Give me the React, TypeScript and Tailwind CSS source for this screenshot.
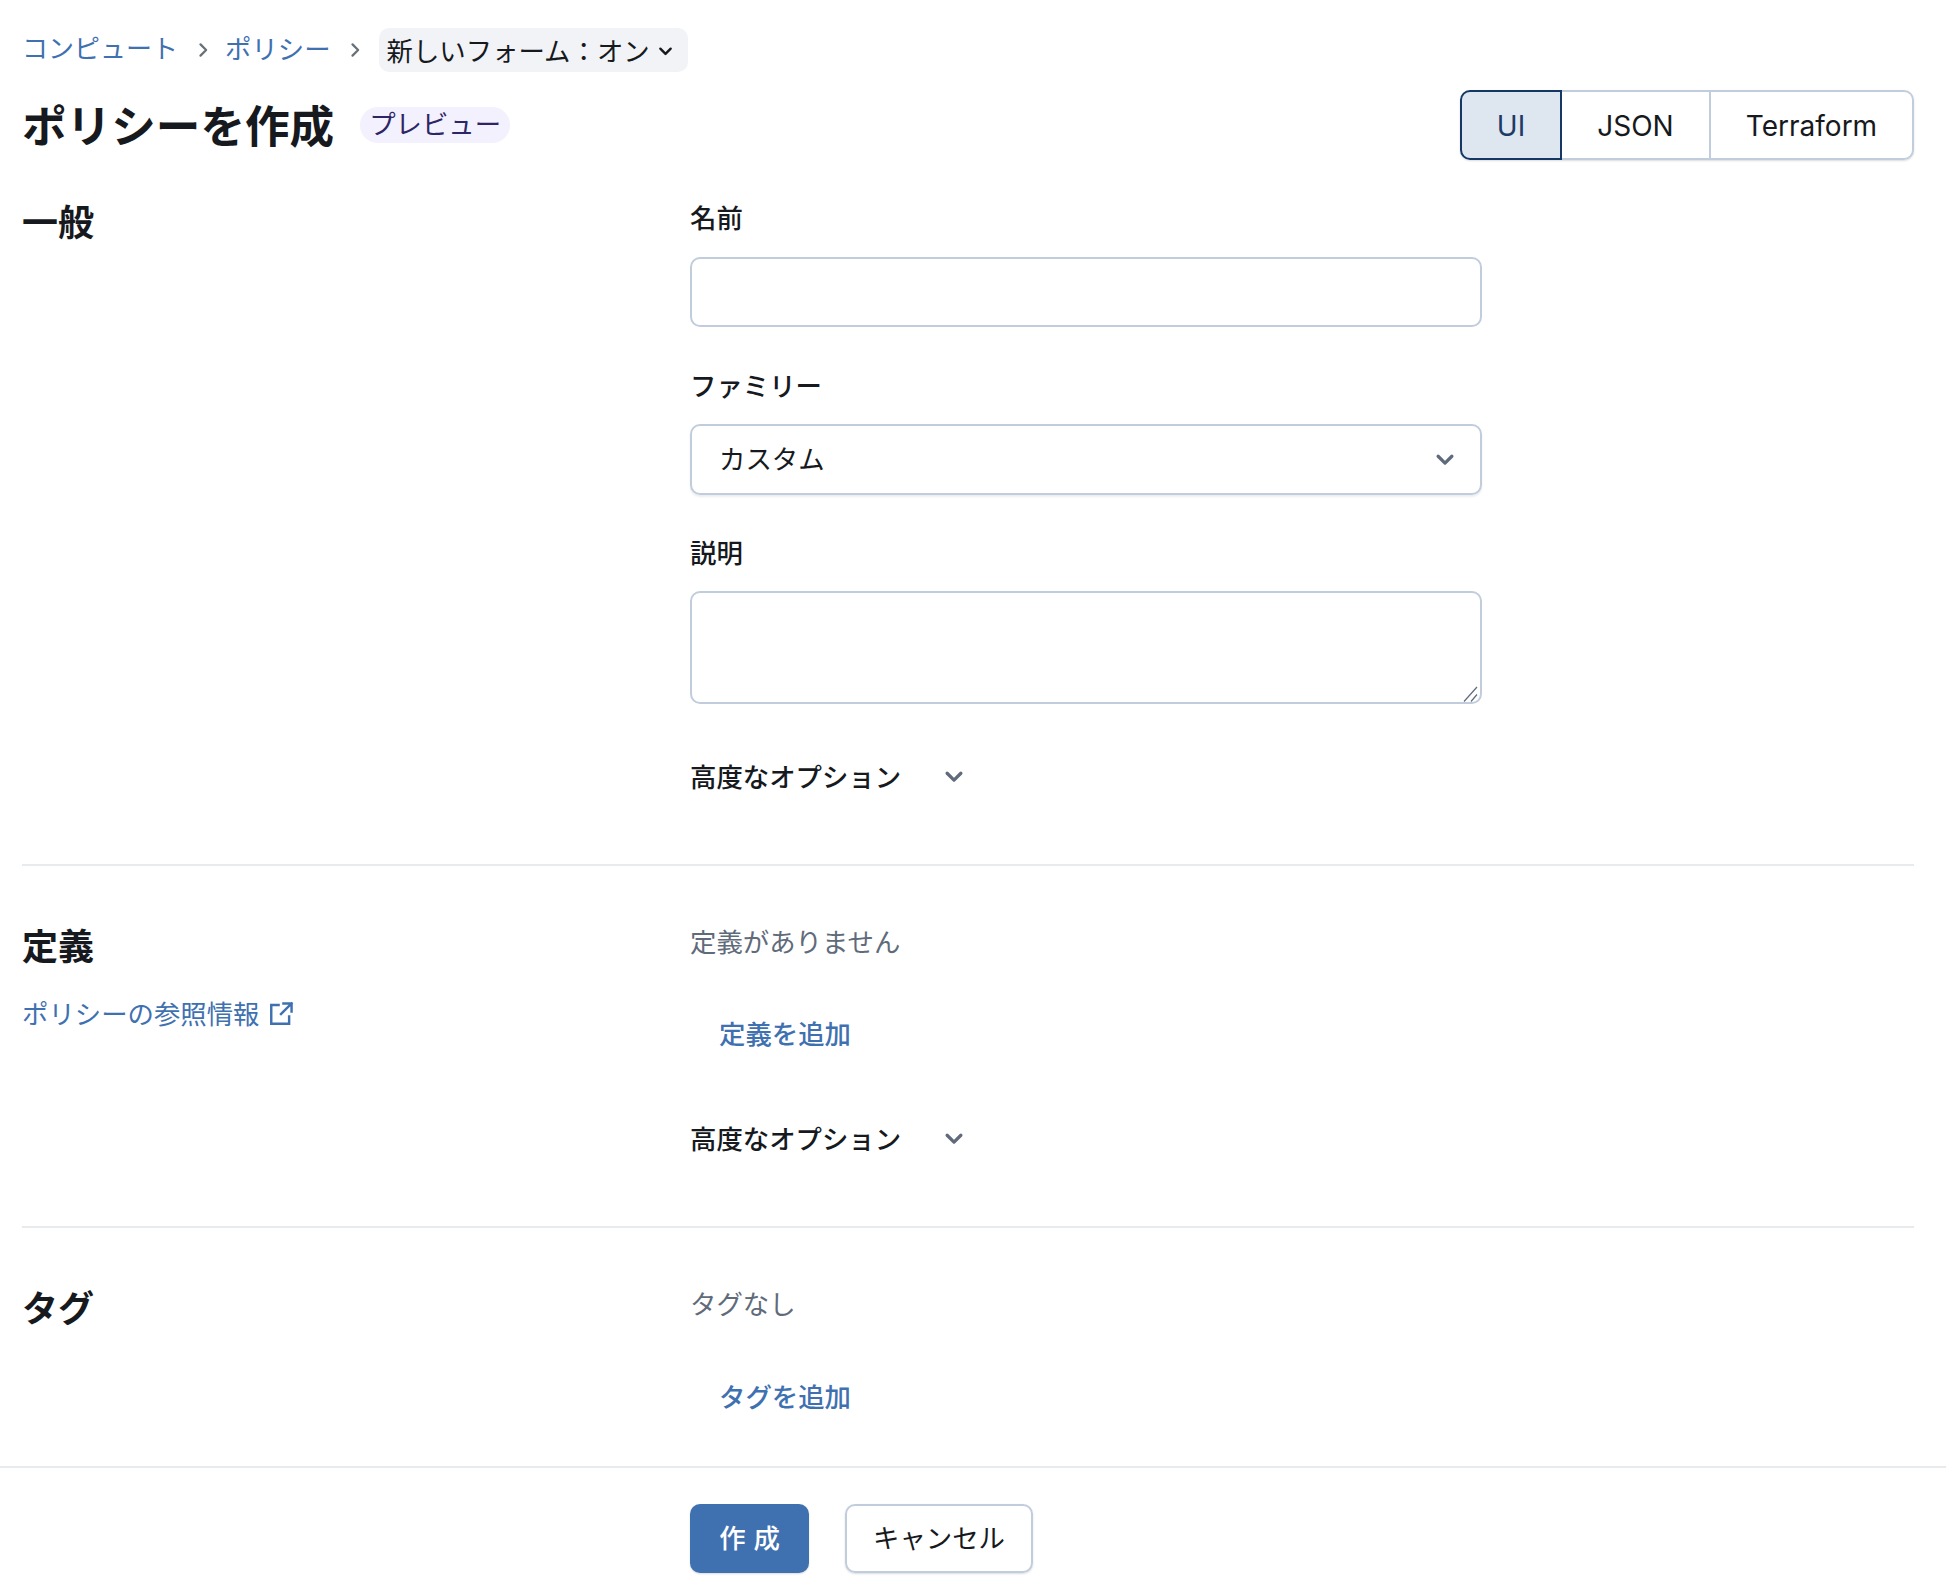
import { ReactNode } from 'react';

const FONT = '[font-family:Inter,"Noto_Sans_CJK_JP",sans-serif]';

function Chevron({ className }: { className: string }) {
  return (
    <svg viewBox="0 0 16 16" fill="none" stroke="currentColor" strokeWidth="2.6" strokeLinecap="round" strokeLinejoin="round" className={className}>
      <path d="M2.5 5 8 10.5 13.5 5" />
    </svg>
  );
}

function Crumb() {
  return (
    <svg viewBox="0 0 16 16" fill="none" stroke="currentColor" strokeWidth="1.8" strokeLinecap="round" strokeLinejoin="round" className="h-[20px] w-[20px] text-[#687078]">
      <path d="M6 3.5 10.5 8 6 12.5" />
    </svg>
  );
}

function Label({ children }: { children: ReactNode }) {
  return <label className="mb-[22px] block h-[32px] text-[26.4px] font-medium leading-[32px] text-[#16191d]">{children}</label>;
}

function Advanced() {
  return (
    <button className="flex h-[32px] items-center text-[26.4px] font-medium leading-[32px] text-[#16191d]">
      高度なオプション
      <Chevron className="ml-[43px] h-[20px] w-[20px] text-[#5f6b7a]" />
    </button>
  );
}

function Section({ left, children, className }: { left: ReactNode; children: ReactNode; className: string }) {
  return (
    <section className={`grid grid-cols-[668px_792px] ${className}`}>
      <div>{left}</div>
      <div>{children}</div>
    </section>
  );
}

export default function App() {
  return (
    <div className={`flex h-[1592px] flex-col overflow-hidden bg-white ${FONT}`}>
      <div className="pl-[22px] pr-[32px]">
        {/* Breadcrumb */}
        <nav className="mt-[28px] flex h-[44px] items-center text-[26.4px] leading-[32px]">
          <a className="mb-[3px] w-[158px] whitespace-nowrap text-[26px] text-[#3f71b0]">コンピュート</a>
          <span className="mx-[13px] mr-[12px] flex"><Crumb /></span>
          <a className="mb-[3px] whitespace-nowrap text-[#3f71b0]">ポリシー</a>
          <span className="ml-[14px] mr-[14px] flex"><Crumb /></span>
          <button className="flex h-[44px] w-[309px] items-center rounded-[10px] bg-[#f2f3f6] pl-[8px] pt-[2px] text-[26.4px] text-[#16191d]">
            新しいフォーム：オン
            <Chevron className="ml-[8px] h-[15px] w-[15px]" />
          </button>
        </nav>

        {/* Title row */}
        <header className="mt-[18px] flex items-center justify-between">
          <div className="flex items-center">
            <h1 className="h-[69px] text-[44.6px] font-bold leading-[72px] text-[#16191d]">ポリシーを作成</h1>
            <span className="ml-[26px] flex h-[36px] items-center rounded-full bg-[#f3f1fd] px-[9px] text-[26.4px] text-[#2e2566]">プレビュー</span>
          </div>
          <div className="flex h-[70px] rounded-[10px] text-[28px] leading-none text-[#16191d] shadow-[0_1px_2px_rgba(0,28,36,0.15)]">
            <button className="w-[102px] rounded-l-[10px] border-2 border-[#143763] bg-[#dee6f0] pt-[2px] text-[#1f3a66]">UI</button>
            <button className="w-[149px] border-y-2 border-r-2 border-[#c1cddc] pt-[2px]">JSON</button>
            <button className="w-[203px] rounded-r-[10px] border-y-2 border-r-2 border-[#c1cddc] pt-[2px]">Terraform</button>
          </div>
        </header>

        {/* General */}
        <Section
          className="mt-[43px] h-[663px] border-b-2 border-[#e8ebee]"
          left={<h2 className="mt-[-6px] text-[36px] font-bold leading-[52px] text-[#16191d]">一般</h2>}
        >
          <div className="mt-[-1px] pb-[1px]"><Label>名前</Label></div>
          <input className="mb-[43px] block h-[70px] w-full rounded-[10px] border-2 border-[#c1cddc] outline-none" />
          <Label>ファミリー</Label>
          <button className="mb-[42px] flex h-[71px] w-full items-center justify-between rounded-[10px] border-2 border-[#c1cddc] pl-[27px] pr-[25px] text-[26.4px] text-[#16191d] shadow-[0_2px_2px_rgba(0,28,36,0.08)]">
            カスタム
            <Chevron className="h-[20px] w-[20px] text-[#5f6b7a]" />
          </button>
          <Label>説明</Label>
          <div className="relative mb-[57px] h-[113px]">
            <textarea className="block h-full w-full resize-none rounded-[10px] border-2 border-[#c1cddc] outline-none" />
            {/* resize grip */}
            <svg viewBox="0 0 16 16" fill="none" stroke="#5f6b7a" strokeWidth="1.2" className="absolute bottom-[2px] right-[4px] h-[16px] w-[16px]">
              <path d="M15 1 2 15.5M15 8.5 9 15.5" />
            </svg>
          </div>
          <Advanced />
        </Section>

        {/* Definitions */}
        <Section
          className="h-[362px] border-b-2 border-[#e8ebee] pt-[60px]"
          left={
            <>
              <h2 className="mt-[-5px] text-[36px] font-bold leading-[52px] text-[#16191d]">定義</h2>
              <a className="mt-[25px] flex h-[32px] items-center text-[26.4px] leading-[32px] text-[#3f71b0]">
                ポリシーの参照情報
                <svg viewBox="0 0 16 16" fill="none" stroke="currentColor" strokeWidth="1.5" strokeLinecap="square" className="ml-[8px] h-[26px] w-[26px]">
                  <path d="M6.5 2.5H2v11.5h11V9.5M9.5 1.5h5v5M14.5 1.5 8 8" />
                </svg>
              </a>
            </>
          }
        >
          <p className="h-[32px] text-[26.4px] leading-[32px] text-[#5f6b7a]">定義がありません</p>
          <a className="mt-[60px] block h-[32px] pl-[29px] text-[26.4px] font-medium leading-[32px] text-[#3f71b0]">定義を追加</a>
          <div className="mt-[73px]"><Advanced /></div>
        </Section>

        {/* Tags */}
        <Section
          className="h-[238px] pt-[60px]"
          left={<h2 className="mt-[-5px] text-[36px] font-bold leading-[52px] text-[#16191d]">タグ</h2>}
        >
          <p className="h-[32px] text-[26.4px] leading-[32px] text-[#5f6b7a]">タグなし</p>
          <a className="mt-[61px] block h-[32px] pl-[29px] text-[26.4px] font-medium leading-[32px] text-[#3f71b0]">タグを追加</a>
        </Section>
      </div>

      {/* Footer */}
      <footer className="flex gap-[36px] border-t-2 border-[#e8ebee] pl-[690px] pt-[36px]">
        <button className="h-[69px] w-[119px] rounded-[10px] bg-[#3f71b0] pl-[8px] text-[26.4px] font-medium tracking-[0.3em] text-white shadow-[0_1px_2px_rgba(0,28,36,0.15)]">作成</button>
        <button className="h-[69px] w-[188px] rounded-[10px] border-2 border-[#c1cddc] pt-[1px] text-[26.4px] text-[#16191d] shadow-[0_1px_2px_rgba(0,28,36,0.15)]">キャンセル</button>
      </footer>
    </div>
  );
}
